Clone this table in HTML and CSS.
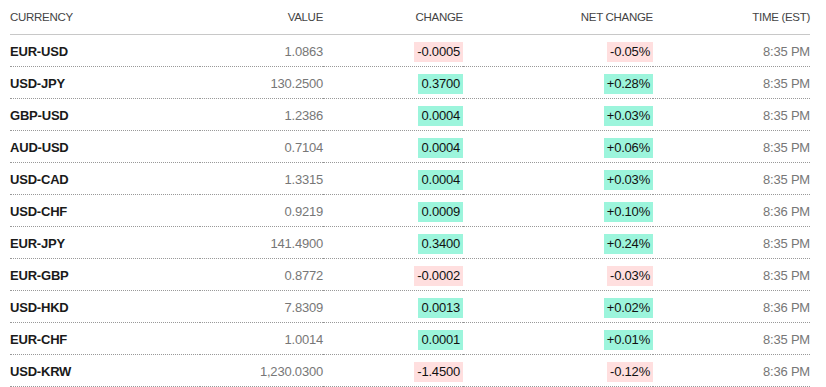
FILE: index.html
```html
<!DOCTYPE html>
<html>
<head>
<meta charset="utf-8">
<link rel="stylesheet" href="styles.css">
</head>
<body>
<div class="wrap">
<table class="fx">
  <colgroup>
    <col class="c-cur"><col class="c-val"><col class="c-chg"><col class="c-net"><col class="c-time">
  </colgroup>
  <thead>
    <tr><th class="left">CURRENCY</th><th>VALUE</th><th>CHANGE</th><th>NET CHANGE</th><th>TIME (EST)</th></tr>
  </thead>
  <tbody>
    <tr><td class="cur">EUR-USD</td><td class="val">1.0863</td><td><span class="b neg">-0.0005</span></td><td><span class="b neg">-0.05%</span></td><td class="time">8:35 PM</td></tr>
    <tr><td class="cur">USD-JPY</td><td class="val">130.2500</td><td><span class="b pos">0.3700</span></td><td><span class="b pos">+0.28%</span></td><td class="time">8:35 PM</td></tr>
    <tr><td class="cur">GBP-USD</td><td class="val">1.2386</td><td><span class="b pos">0.0004</span></td><td><span class="b pos">+0.03%</span></td><td class="time">8:35 PM</td></tr>
    <tr><td class="cur">AUD-USD</td><td class="val">0.7104</td><td><span class="b pos">0.0004</span></td><td><span class="b pos">+0.06%</span></td><td class="time">8:35 PM</td></tr>
    <tr><td class="cur">USD-CAD</td><td class="val">1.3315</td><td><span class="b pos">0.0004</span></td><td><span class="b pos">+0.03%</span></td><td class="time">8:35 PM</td></tr>
    <tr><td class="cur">USD-CHF</td><td class="val">0.9219</td><td><span class="b pos">0.0009</span></td><td><span class="b pos">+0.10%</span></td><td class="time">8:36 PM</td></tr>
    <tr><td class="cur">EUR-JPY</td><td class="val">141.4900</td><td><span class="b pos">0.3400</span></td><td><span class="b pos">+0.24%</span></td><td class="time">8:35 PM</td></tr>
    <tr><td class="cur">EUR-GBP</td><td class="val">0.8772</td><td><span class="b neg">-0.0002</span></td><td><span class="b neg">-0.03%</span></td><td class="time">8:35 PM</td></tr>
    <tr><td class="cur">USD-HKD</td><td class="val">7.8309</td><td><span class="b pos">0.0013</span></td><td><span class="b pos">+0.02%</span></td><td class="time">8:36 PM</td></tr>
    <tr><td class="cur">EUR-CHF</td><td class="val">1.0014</td><td><span class="b pos">0.0001</span></td><td><span class="b pos">+0.01%</span></td><td class="time">8:35 PM</td></tr>
    <tr><td class="cur">USD-KRW</td><td class="val">1,230.0300</td><td><span class="b neg">-1.4500</span></td><td><span class="b neg">-0.12%</span></td><td class="time">8:36 PM</td></tr>
  </tbody>
</table>
</div>
</body>
</html>
```
FILE: styles.css
```css
html, body {
  margin: 0;
  padding: 0;
  background: #fff;
}
body {
  font-family: "Liberation Sans", Arial, sans-serif;
  color: #222;
}
.wrap {
  padding: 0 16px 0 10px;
}
.fx {
  width: 800px;
  border-collapse: collapse;
  table-layout: fixed;
}
.c-cur { width: 190px; }
.c-val { width: 123px; }
.c-chg { width: 140px; }
.c-net { width: 190px; }
.c-time { width: 157px; }
.fx th {
  height: 34px;
  padding: 0;
  font-size: 11.5px;
  font-weight: normal;
  color: #444;
  text-align: right;
  vertical-align: middle;
  border-bottom: 1px solid #c8c8c8;
  letter-spacing: -0.3px;
}
.fx th.left { text-align: left; }
.fx td {
  height: 29px;
  padding: 2px 0 0 0;
  font-size: 13px;
  text-align: right;
  vertical-align: middle;
  border-bottom: 1px dotted #999;
  letter-spacing: -0.2px;
}
.fx td.cur {
  text-align: left;
  font-weight: bold;
  color: #1a1a1a;
}
.fx td.val, .fx td.time { color: #777; }
.b {
  display: inline-block;
  padding: 0 3px;
  line-height: 20px;
  color: #111;
}
.b.neg { background: #ffdfdf; }
.b.pos { background: #9cf5dc; }
```
